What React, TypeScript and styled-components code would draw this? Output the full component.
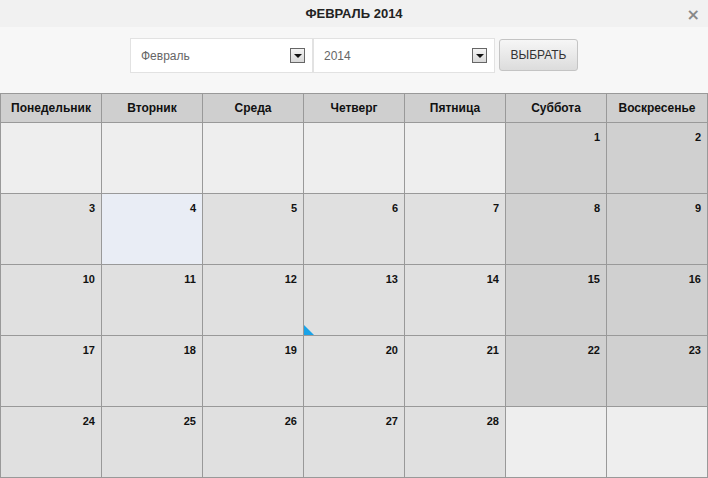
import * as React from 'react'
import styled, { createGlobalStyle } from 'styled-components'

const Global = createGlobalStyle`
  html, body {
    margin: 0;
    padding: 0;
    background: #f7f7f7;
    font-family: "Liberation Sans", Arial, sans-serif;
  }
`

const Page = styled.div`
  width: 708px;
  height: 478px;
  overflow: hidden;
  background: #f7f7f7;
`

const TitleBar = styled.div`
  position: relative;
  height: 27px;
  background: #f1f1f1;
  display: flex;
  align-items: center;
  justify-content: center;
  font-family: "Liberation Sans Narrow", "Liberation Sans", Arial, sans-serif;
  font-weight: bold;
  font-size: 13px;
  color: #222;
`

const Close = styled.span`
  position: absolute;
  right: 8px;
  top: 5px;
  font-size: 16px;
  color: #888;
  font-family: "DejaVu Sans", sans-serif;
  font-weight: bold;
`

const Controls = styled.div`
  height: 66px;
  display: flex;
  justify-content: center;
  align-items: flex-start;
  padding-top: 11px;
  box-sizing: border-box;
`

const Select = styled.div<{ $width: number }>`
  width: ${p => p.$width}px;
  height: 35px;
  box-sizing: border-box;
  background: #fff;
  border: 1px solid #e2e2e2;
  display: flex;
  align-items: center;
  justify-content: space-between;
  padding: 0 7px 0 10px;
  font-size: 12px;
  color: #666;
`

const Arrow = styled.span`
  width: 15px;
  height: 15px;
  box-sizing: border-box;
  border: 1px solid #666;
  background: linear-gradient(#f4f4f4, #d8d8d8);
  display: flex;
  align-items: center;
  justify-content: center;
  &::after {
    content: '';
    border-left: 4px solid transparent;
    border-right: 4px solid transparent;
    border-top: 4px solid #111;
    margin-top: 1px;
  }
`

const Button = styled.button`
  margin-left: 4px;
  margin-top: 1px;
  width: 79px;
  height: 32px;
  border: 1px solid #c4c4c4;
  border-radius: 3px;
  background: linear-gradient(#f6f6f6, #dcdcdc);
  font-family: "Liberation Sans", Arial, sans-serif;
  font-size: 12px;
  color: #333;
  padding: 0;
`

const Table = styled.table`
  width: 708px;
  border-collapse: collapse;
  table-layout: fixed;
`

const Head = styled.th`
  height: 28px;
  padding: 0;
  border: 1px solid #999;
  background: #cfcfcf;
  font-size: 12px;
  font-weight: bold;
  color: #111;
`

const Cell = styled.td<{ $kind: 'empty' | 'day' | 'weekend' | 'today' }>`
  position: relative;
  height: 62px;
  padding: 8px 6px 0 0;
  border: 1px solid #999;
  vertical-align: top;
  text-align: right;
  font-size: 11px;
  line-height: 13px;
  font-weight: bold;
  color: #111;
  background: ${p =>
    p.$kind === 'empty' ? '#eeeeee' :
    p.$kind === 'weekend' ? '#d0d0d0' :
    p.$kind === 'today' ? '#e9edf5' : '#e0e0e0'};
`

const Marker = styled.span`
  position: absolute;
  left: 0;
  bottom: 0;
  width: 0;
  height: 0;
  border-bottom: 10px solid #1aa3e8;
  border-right: 10px solid transparent;
`

const days = ['Понедельник', 'Вторник', 'Среда', 'Четверг', 'Пятница', 'Суббота', 'Воскресенье']

// February 2014 starts on Saturday
const weeks: (number | null)[][] = []
{
  let day = 1 - 5
  for (let w = 0; w < 5; w++) {
    const row: (number | null)[] = []
    for (let d = 0; d < 7; d++, day++) {
      row.push(day >= 1 && day <= 28 ? day : null)
    }
    weeks.push(row)
  }
}

export default function App() {
  return (
    <Page>
      <Global />
      <TitleBar>
        ФЕВРАЛЬ 2014
        <Close>×</Close>
      </TitleBar>
      <Controls>
        <Select $width={183}>
          Февраль
          <Arrow />
        </Select>
        <Select $width={182}>
          2014
          <Arrow />
        </Select>
        <Button>ВЫБРАТЬ</Button>
      </Controls>
      <Table>
        <thead>
          <tr>
            {days.map(d => <Head key={d}>{d}</Head>)}
          </tr>
        </thead>
        <tbody>
          {weeks.map((row, w) => (
            <tr key={w}>
              {row.map((n, d) => {
                const kind = n === null ? 'empty' : n === 4 ? 'today' : d >= 5 ? 'weekend' : 'day'
                return (
                  <Cell key={d} $kind={kind}>
                    {n}
                    {n === 13 && <Marker />}
                  </Cell>
                )
              })}
            </tr>
          ))}
        </tbody>
      </Table>
    </Page>
  )
}
